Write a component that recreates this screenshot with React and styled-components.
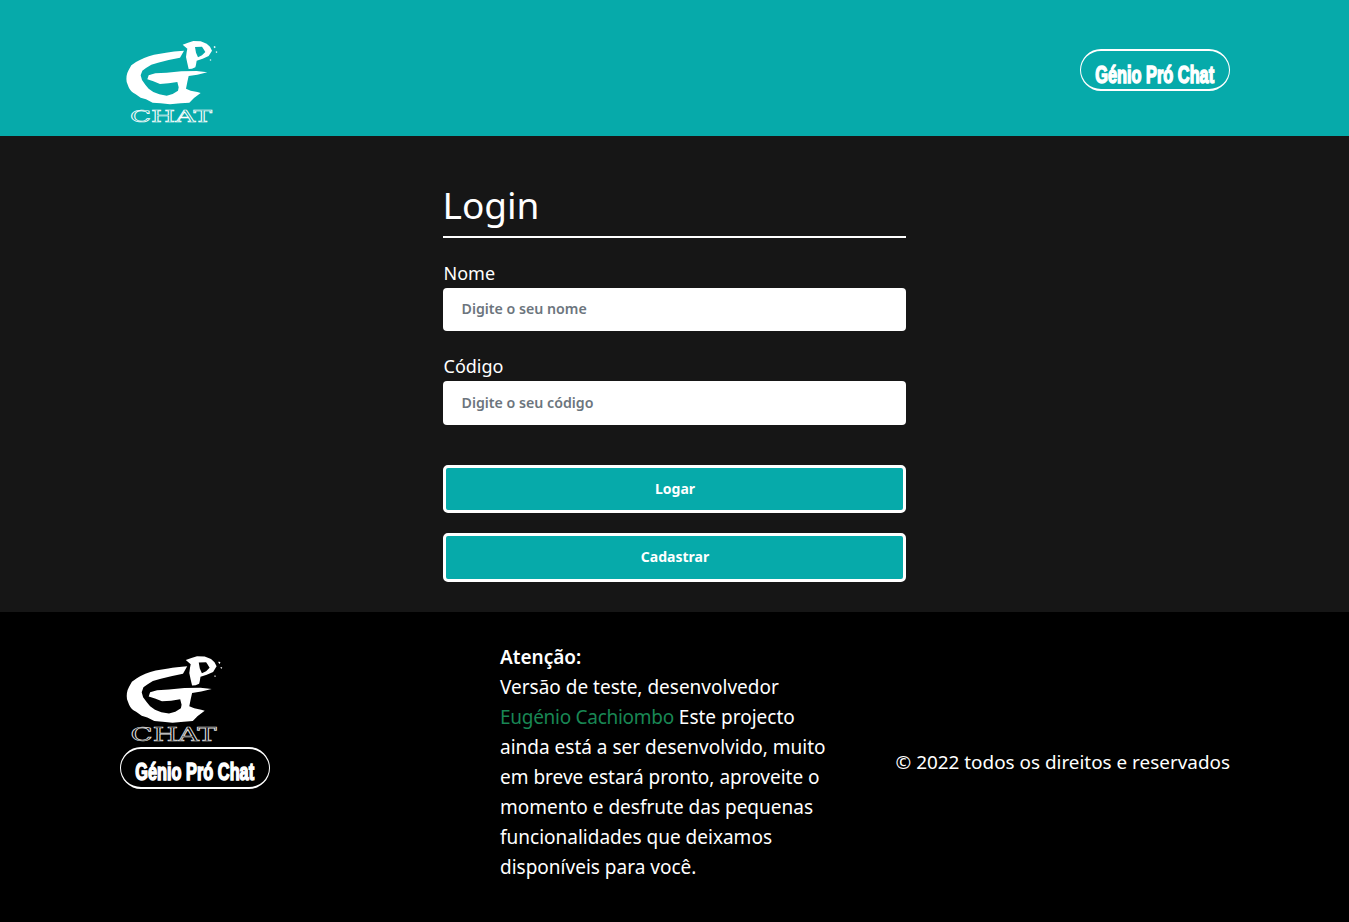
import React from "react";
import styled, { createGlobalStyle } from "styled-components";

const FONT = `"Noto Sans", "Open Sans", sans-serif`;
const Global = createGlobalStyle`
  html, body { margin: 0; padding: 0; background: #000; }
  body { font-family: ${FONT}; color: #fff; }
  * { box-sizing: border-box; }
`;
const Page = styled.div`display: flex; flex-direction: column; min-height: 922px;`;
const Header = styled.header`
  height: 136px; background: #06aaaa; padding: 0 119px 0 120px;
  display: flex; justify-content: space-between; align-items: flex-start;
`;
const LogoSlot = styled.a`display: block; margin-top: ${p => p.$top}px; width: ${p => p.$w}px;`;
const LogoSvg = styled.svg`display: block; width: 100%; height: auto;`;
const Brand = styled.a`
  display: flex; align-items: center; justify-content: center;
  width: 150px; height: 42px; border-style: solid; border-color: #fff; border-width: 2px 1px; border-radius: 21px;
  margin-top: ${p => p.$top || 0}px; padding-top: 9px;
`;
const BrandText = styled.span`
  display: inline-block; transform: scaleX(0.71);
  font-family: "Liberation Sans", sans-serif;
  font-weight: 700; font-size: 23px; line-height: 28px; color: #fff; -webkit-text-stroke: 1.5px #fff;
  white-space: nowrap;
`;
const Main = styled.main`height: 476px; background: #161616; display: flex; justify-content: center;`;
const Form = styled.form`width: 463px; margin-right: 1px; padding-top: 43px; display: flex; flex-direction: column;`;
const Title = styled.h1`
  margin: 0; height: 59px; border-bottom: 2px solid #fff;
  font-weight: 400; font-size: 37px; line-height: 52px;
`;
const Label = styled.label`display: block; font-size: 18px; line-height: 24px; margin: 23px 0 3px; padding-left: 1px;`;
const Input = styled.input`
  display: block; width: 100%; height: ${p => p.$h}px; border: 0; border-radius: 4px; background: #fff;
  padding: 0 19px 2px; font: 600 14.2px ${FONT}; color: #212529; outline: 0;
  &::placeholder { color: #6c757d; opacity: 1; }
`;
const Button = styled.button`
  display: block; width: 100%; height: ${p => p.$h}px; margin-top: ${p => p.$top}px; padding: 0 0 2px 2px;
  background: #06aaaa; border: 3px solid #fff; border-radius: 5px; color: #fff;
  font: 700 14px ${FONT};
`;
const Footer = styled.footer`
  height: 310px; background: #000; padding: 0 119px 0 120px;
  display: grid; grid-template-columns: 380px 340px 1fr; align-items: start;
`;
const FooterBrand = styled.div`display: flex; flex-direction: column; width: 150px; padding-top: 40px;`;
const Notice = styled.p`margin: 30px 0 0; font-size: 19px; line-height: 30px;`;
const Strong = styled.span`display: block; font-weight: 600;`;
const Dev = styled.a`color: #198754; letter-spacing: -0.28px;`;
const Copy = styled.p`justify-self: end; margin: 135px 0 0; font-size: 18.9px; line-height: 30px; white-space: nowrap;`;

function Logo({ stroke }) {
  return (
    <LogoSvg viewBox="30 25 300 270" aria-label="GP Chat">
      <path fill="#fff" d="M222 66Q190 68 168 72L132 78Q100 86 78 100L64 110L56 124Q47 140 50 160L56 176Q62 190 76 196L92 207L108 212L128 222L152 224L180 227L212 224L238 222L252 208L272 193L262 190L242 186L228 180L232 160L236 142L262 138L292 131L260 127L214 128L170 132L136 134L116 140L112 152L130 158L150 166L176 164L202 160L206 176L204 186L188 196L170 201L148 197L130 190L116 180L106 168L96 154L92 140L97 126L108 118L124 108L144 102L176 94L210 87Z" />
      <path fill="#fff" fillRule="evenodd" d="M218 48L234 42L250 37L272 38L290 45L300 54L306 66L296 82L278 90L260 96L258 108L256 116L246 120L236 121L232 104L228 85L230 70L232 60ZM255 55L258 72L264 86L276 80L286 70L280 60L276 54Z" />
      <path fill="#fff" d="M312 52l5 2-2 5-4-3zM318 68l4 1-1 4-4-2zM300 92l4 1-1 3-4-1z" />
      <text x="60" y="279" textLength="246" lengthAdjust="spacingAndGlyphs" fontFamily="'DejaVu Serif', serif" fontSize="52" fill="none" stroke={stroke} strokeWidth="2">CHAT</text>
    </LogoSvg>
  );
}

export default function App() {
  return (
    <Page>
      <Global />
      <Header>
        <LogoSlot $top={37} $w={100}><Logo stroke="#fff" /></LogoSlot>
        <Brand $top={49}><BrandText>Génio Pró Chat</BrandText></Brand>
      </Header>
      <Main>
        <Form onSubmit={e => e.preventDefault()}>
          <Title>Login</Title>
          <Label>Nome</Label>
          <Input $h={43} placeholder="Digite o seu nome" />
          <Label>Código</Label>
          <Input $h={44} placeholder="Digite o seu código" />
          <Button $h={48} $top={40}>Logar</Button>
          <Button $h={49} $top={20}>Cadastrar</Button>
        </Form>
      </Main>
      <Footer>
        <FooterBrand>
          <LogoSlot $top={0} $w={105}><Logo stroke="#ddd" /></LogoSlot>
          <Brand><BrandText>Génio Pró Chat</BrandText></Brand>
        </FooterBrand>
        <Notice>
          <Strong>Atenção:</Strong>
          Versão de teste, desenvolvedor<br />
          <Dev>Eugénio Cachiombo</Dev> Este projecto ainda está a ser desenvolvido, muito em breve estará pronto, aproveite o momento e desfrute das pequenas funcionalidades que deixamos disponíveis para você.
        </Notice>
        <Copy>© 2022 todos os direitos e reservados</Copy>
      </Footer>
    </Page>
  );
}
